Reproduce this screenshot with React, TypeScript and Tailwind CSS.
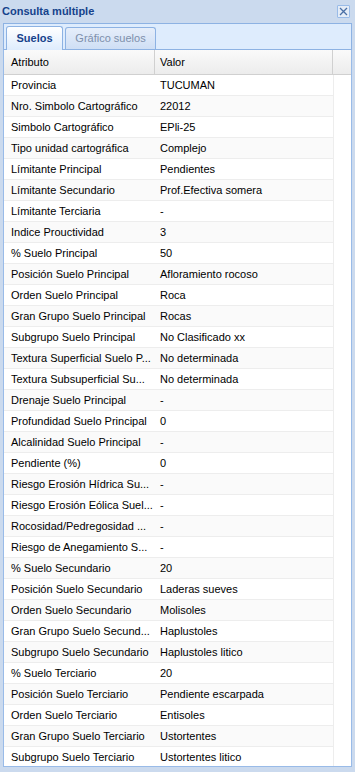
import React from 'react'

const rows: [string, string][] = [
  ['Provincia', 'TUCUMAN'],
  ['Nro. Simbolo Cartográfico', '22012'],
  ['Simbolo Cartográfico', 'EPli-25'],
  ['Tipo unidad cartográfica', 'Complejo'],
  ['Límitante Principal', 'Pendientes'],
  ['Límitante Secundario', 'Prof.Efectiva somera'],
  ['Límitante Terciaria', '-'],
  ['Indice Prouctividad', '3'],
  ['% Suelo Principal', '50'],
  ['Posición Suelo Principal', 'Afloramiento rocoso'],
  ['Orden Suelo Principal', 'Roca'],
  ['Gran Grupo Suelo Principal', 'Rocas'],
  ['Subgrupo Suelo Principal', 'No Clasificado xx'],
  ['Textura Superficial Suelo P...', 'No determinada'],
  ['Textura Subsuperficial Su...', 'No determinada'],
  ['Drenaje Suelo Principal', '-'],
  ['Profundidad Suelo Principal', '0'],
  ['Alcalinidad Suelo Principal', '-'],
  ['Pendiente (%)', '0'],
  ['Riesgo Erosión Hídrica Su...', '-'],
  ['Riesgo Erosión Eólica Suel...', '-'],
  ['Rocosidad/Pedregosidad ...', '-'],
  ['Riesgo de Anegamiento S...', '-'],
  ['% Suelo Secundario', '20'],
  ['Posición Suelo Secundario', 'Laderas sueves'],
  ['Orden Suelo Secundario', 'Molisoles'],
  ['Gran Grupo Suelo Secund...', 'Haplustoles'],
  ['Subgrupo Suelo Secundario', 'Haplustoles litico'],
  ['% Suelo Terciario', '20'],
  ['Posición Suelo Terciario', 'Pendiente escarpada'],
  ['Orden Suelo Terciario', 'Entisoles'],
  ['Gran Grupo Suelo Terciario', 'Ustortentes'],
  ['Subgrupo Suelo Terciario', 'Ustortentes litico'],
]

export default function App() {
  return (
    <div
      className="w-[355px] h-[772px] bg-[#cbdaee] flex flex-col overflow-hidden"
      style={{ fontFamily: '"Liberation Sans", Arial, sans-serif' }}
    >
      {/* title bar */}
      <div className="h-[23px] flex items-center justify-between pl-[2px] pr-[5px]">
        <span className="text-[11px] font-bold text-[#15428b]">Consulta múltiple</span>
        <button className="w-[13px] h-[13px] border border-[#99bbe8] bg-[#e4ecf7] flex items-center justify-center rounded-[1px]">
          <svg width="9" height="9" viewBox="0 0 9 9">
            <path d="M1 1 L8 8 M8 1 L1 8" stroke="#4a6fa5" strokeWidth="1.3" />
          </svg>
        </button>
      </div>

      <div className="flex-1 flex flex-col pl-[3px] pr-[3px] pb-[5px] min-h-0">
        {/* tabs */}
        <div className="h-[26px] bg-[#deecfd] border border-[#8db2e3] border-b-0 flex items-end pl-[2px] gap-[2px]">
          <div className="h-[24px] flex items-center bg-gradient-to-b from-white to-[#deecfd] border border-[#8db2e3] border-b-0 rounded-t-[3px] text-[11px] font-bold text-[#15428b] w-[57px] justify-center mb-[-1px] relative z-10">
            Suelos
          </div>
          <div className="h-[22px] flex items-center bg-gradient-to-b from-[#e6eefa] to-[#cfdff5] border border-[#8db2e3] border-b-0 rounded-t-[3px] text-[11px] text-[#7d8fab] w-[91px] justify-center whitespace-nowrap">
            Gráfico suelos
          </div>
        </div>
        <div className="h-[1px] bg-[#8db2e3]" />

        {/* grid */}
        <div className="flex-1 bg-white border-l border-r border-b border-[#99bbe8] flex flex-col min-h-0 overflow-hidden">
          <div className="h-[25px] flex bg-gradient-to-b from-[#fafafa] to-[#ececec] border-b border-[#d0d0d0] text-[11px] text-black shrink-0">
            <div className="w-[151px] pl-[7px] flex items-center border-r border-[#d0d0d0]">Atributo</div>
            <div className="w-[178px] pl-[5px] flex items-center border-r border-[#d0d0d0]">Valor</div>
            <div className="flex-1" />
          </div>
          <div className="flex flex-col">
            {rows.map(([a, v], i) => (
              <div
                key={i}
                className={`w-[330px] h-[21px] flex items-center text-[11px] text-black border-b border-r border-[#ededed] ${
                  i % 2 === 1 ? 'bg-[#fafafa]' : 'bg-white'
                }`}
              >
                <div className="w-[151px] pl-[7px] whitespace-nowrap overflow-hidden">{a}</div>
                <div className="flex-1 pl-[5px] whitespace-nowrap overflow-hidden">{v}</div>
              </div>
            ))}
          </div>
        </div>
      </div>
    </div>
  )
}
